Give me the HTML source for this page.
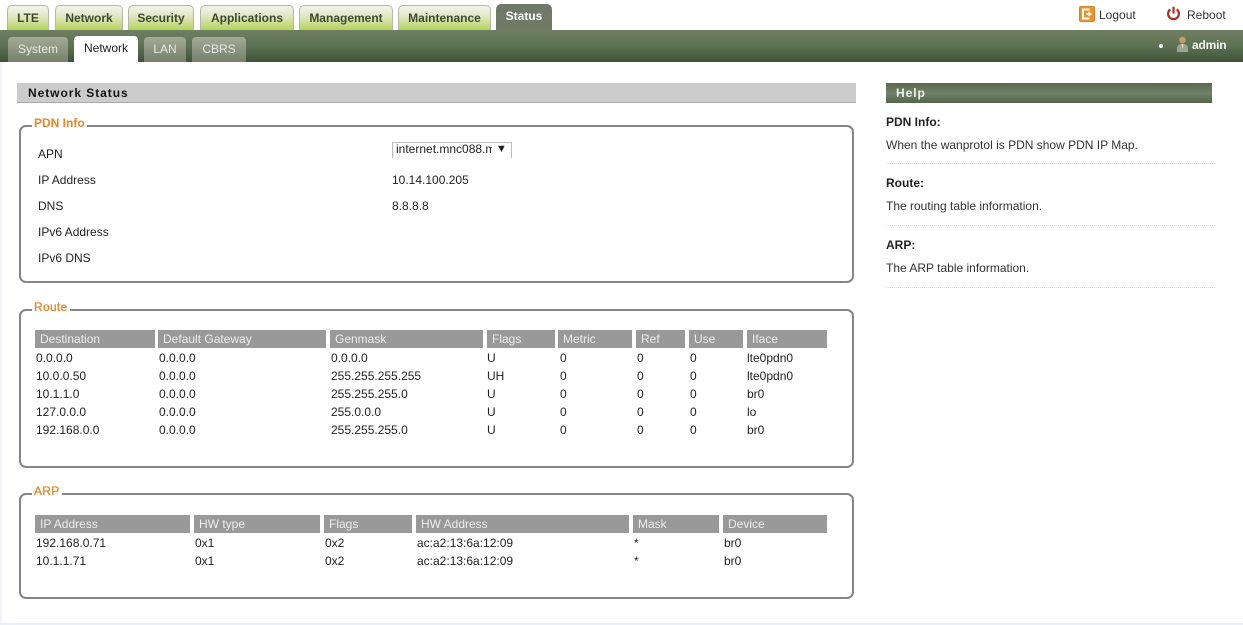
<!DOCTYPE html>
<html><head><meta charset="utf-8"><style>
html,body{margin:0;padding:0;background:#fff}
#p{position:relative;width:1243px;height:625px;overflow:hidden;background:#fff;font:12px/14px "Liberation Sans",sans-serif;color:#222}
#p div{position:absolute;white-space:nowrap}
.t{top:5px;height:24px;border:1px solid #b5b8a8;border-bottom:0;border-radius:5px 5px 0 0;background:linear-gradient(#f4f5ea 0,#dfe6bf 45%,#b5d35a 100%);color:#3c4a30;font-weight:bold;text-align:center;line-height:24px;box-sizing:content-box}
.s{top:37px;height:25px;border-radius:4px 4px 0 0;background:linear-gradient(#a3aa98,#74806a);color:#e8ebe2;text-align:center;line-height:25px}
.h{top:83px;height:19px;line-height:20px;font-weight:bold;letter-spacing:.95px}
.f{left:19px;width:831px;border:2px solid #858585;border-radius:7px}
.l{left:32px;background:#fff;padding:0 2px;color:#e2872a;font-weight:bold;line-height:14px}
.th{background:#999;color:#eee;height:18px;line-height:18px;padding-left:5px;box-sizing:border-box}
.r{position:absolute;left:0;top:0}
.c{color:#222}
.dot{left:886px;width:329px;border-top:1px dotted #d8d8d8}
</style></head><body><div id="p">
<div style="left:0;top:62px;width:2px;height:563px;background:#f2f6fa"></div>
<div style="left:0;top:623px;width:1243px;height:2px;background:#e4f0fa"></div>

<div style="left:0;top:30px;width:1243px;height:32px;background:linear-gradient(#6f7e62,#5d7253 50%,#3f5238)"></div>
<div class="t" style="left:7px;width:40px">LTE</div>
<div class="t" style="left:55px;width:66px">Network</div>
<div class="t" style="left:128px;width:64px">Security</div>
<div class="t" style="left:200px;width:92px">Applications</div>
<div class="t" style="left:299px;width:92px">Management</div>
<div class="t" style="left:398px;width:91px">Maintenance</div>
<div style="left:496px;top:4px;width:56px;height:26px;border-radius:5px 5px 0 0;background:linear-gradient(#70796a,#6f7a64);color:#fff;font-weight:bold;text-align:center;line-height:24px">Status</div>

<div class="s" style="left:8px;width:60px">System</div>
<div class="s" style="left:74px;top:36px;width:64px;height:26px;background:#fff;color:#222;line-height:25px">Network</div>
<div class="s" style="left:144px;width:42px">LAN</div>
<div class="s" style="left:192px;width:54px">CBRS</div>

<svg style="position:absolute;left:1079px;top:6px" width="16" height="16" viewBox="0 0 16 16"><rect x=".5" y=".5" width="15" height="15" rx="1.500" fill="#e9932c" stroke="#d9822a"/><path d="M10.500 3.500H4v9h6.500" fill="none" stroke="#fff" stroke-width="2"/><path d="M7 8h3" stroke="#fff" stroke-width="1.500"/><path d="M9.500 5.500l3.500 2.500-3.500 2.500z" fill="#fff"/></svg>
<div style="left:1099px;top:8px;color:#333">Logout</div>
<svg style="position:absolute;left:1166px;top:6px" width="15" height="15" viewBox="0 0 15 15"><path d="M4.300 3.400a5.400 5.400 0 1 0 6.400 0" fill="none" stroke="#a93226" stroke-width="2.200"/><path d="M7.500 .8v6.700" stroke="#a93226" stroke-width="2.200"/></svg>
<div style="left:1187px;top:8px;color:#333">Reboot</div>
<div style="left:1159px;top:44px;width:4px;height:4px;border-radius:50%;background:#fff"></div>
<svg style="position:absolute;left:1176px;top:36px" width="13" height="16" viewBox="0 0 13 16"><circle cx="6.500" cy="4" r="3.300" fill="#c89a6a"/><path d="M1 16v-4q0-4 5.500-4t5.500 4v4z" fill="#9aa596"/><path d="M5.500 8h2l-1 5z" fill="#e8e0d0"/></svg>
<div style="left:1192px;top:38px;color:#f2f4ee;font-weight:bold;letter-spacing:-.2px">admin</div>

<div class="h" style="left:17px;width:839px;background:#ccc;border-bottom:1px solid #aaa;color:#111;text-indent:11px">Network Status</div>
<div class="h" style="left:886px;width:326px;height:20px;background:linear-gradient(#59694d,#71806a 50%,#55664a);color:#f0f2ea;text-indent:10px">Help</div>

<div style="left:886px;top:115px;font-weight:bold;color:#222">PDN Info:</div>
<div style="left:886px;top:138px;color:#333">When the wanprotol is PDN show PDN IP Map.</div>
<div class="dot" style="top:163px"></div>
<div style="left:886px;top:176px;font-weight:bold">Route:</div>
<div style="left:886px;top:199px;color:#333">The routing table information.</div>
<div class="dot" style="top:225px"></div>
<div style="left:886px;top:238px;font-weight:bold">ARP:</div>
<div style="left:886px;top:261px;color:#333">The ARP table information.</div>
<div class="dot" style="top:287px"></div>

<div class="f" style="top:125px;height:154px"></div>
<div class="l" style="top:116px">PDN Info</div>
<div class="c" style="left:38px;top:147px">APN</div>
<div class="c" style="left:38px;top:173px">IP Address</div>
<div class="c" style="left:38px;top:199px">DNS</div>
<div class="c" style="left:38px;top:225px">IPv6 Address</div>
<div class="c" style="left:38px;top:251px">IPv6 DNS</div>
<div style="left:392px;top:142px;width:118px;height:15px;border:1px solid #bbb;border-bottom:0;box-sizing:content-box"></div>
<div class="c" style="left:396px;top:142px;width:96px;overflow:hidden">internet.mnc088.mcc</div>
<div class="c" style="left:496px;top:142px;font-size:11px">▼</div>
<div class="c" style="left:392px;top:173px;width:76px;overflow:hidden">10.14.100.205</div>
<div class="c" style="left:392px;top:199px">8.8.8.8</div>

<div class="f" style="top:309px;height:155px"></div>
<div class="l" style="top:300px;font-weight:normal;letter-spacing:.3px;-webkit-text-stroke:.3px #e2872a">Route</div>
<div class="th" style="left:35px;top:330px;width:120px">Destination</div>
<div class="th" style="left:158px;top:330px;width:168px">Default Gateway</div>
<div class="th" style="left:330px;top:330px;width:153px">Genmask</div>
<div class="th" style="left:487px;top:330px;width:68px">Flags</div>
<div class="th" style="left:558px;top:330px;width:74px">Metric</div>
<div class="th" style="left:636px;top:330px;width:49px">Ref</div>
<div class="th" style="left:689px;top:330px;width:54px">Use</div>
<div class="th" style="left:747px;top:330px;width:80px">Iface</div>

<div class="c" style="left:36px;top:351px">0.0.0.0</div><div class="c" style="left:159px;top:351px">0.0.0.0</div><div class="c" style="left:331px;top:351px">0.0.0.0</div><div class="c" style="left:487px;top:351px">U</div><div class="c" style="left:560px;top:351px">0</div><div class="c" style="left:637px;top:351px">0</div><div class="c" style="left:690px;top:351px">0</div><div class="c" style="left:747px;top:351px">lte0pdn0</div>
<div class="c" style="left:36px;top:369px">10.0.0.50</div><div class="c" style="left:159px;top:369px">0.0.0.0</div><div class="c" style="left:331px;top:369px">255.255.255.255</div><div class="c" style="left:487px;top:369px">UH</div><div class="c" style="left:560px;top:369px">0</div><div class="c" style="left:637px;top:369px">0</div><div class="c" style="left:690px;top:369px">0</div><div class="c" style="left:747px;top:369px">lte0pdn0</div>
<div class="c" style="left:36px;top:387px">10.1.1.0</div><div class="c" style="left:159px;top:387px">0.0.0.0</div><div class="c" style="left:331px;top:387px">255.255.255.0</div><div class="c" style="left:487px;top:387px">U</div><div class="c" style="left:560px;top:387px">0</div><div class="c" style="left:637px;top:387px">0</div><div class="c" style="left:690px;top:387px">0</div><div class="c" style="left:747px;top:387px">br0</div>
<div class="c" style="left:36px;top:405px">127.0.0.0</div><div class="c" style="left:159px;top:405px">0.0.0.0</div><div class="c" style="left:331px;top:405px">255.0.0.0</div><div class="c" style="left:487px;top:405px">U</div><div class="c" style="left:560px;top:405px">0</div><div class="c" style="left:637px;top:405px">0</div><div class="c" style="left:690px;top:405px">0</div><div class="c" style="left:747px;top:405px">lo</div>
<div class="c" style="left:36px;top:423px">192.168.0.0</div><div class="c" style="left:159px;top:423px">0.0.0.0</div><div class="c" style="left:331px;top:423px">255.255.255.0</div><div class="c" style="left:487px;top:423px">U</div><div class="c" style="left:560px;top:423px">0</div><div class="c" style="left:637px;top:423px">0</div><div class="c" style="left:690px;top:423px">0</div><div class="c" style="left:747px;top:423px">br0</div>

<div class="f" style="top:493px;height:102px"></div>
<div class="l" style="top:484px;font-weight:normal;letter-spacing:.3px;-webkit-text-stroke:.3px #e2872a">ARP</div>
<div class="th" style="left:35px;top:515px;width:155px">IP Address</div>
<div class="th" style="left:194px;top:515px;width:126px">HW type</div>
<div class="th" style="left:324px;top:515px;width:88px">Flags</div>
<div class="th" style="left:416px;top:515px;width:213px">HW Address</div>
<div class="th" style="left:633px;top:515px;width:86px">Mask</div>
<div class="th" style="left:723px;top:515px;width:104px">Device</div>

<div class="c" style="left:36px;top:536px">192.168.0.71</div><div class="c" style="left:195px;top:536px">0x1</div><div class="c" style="left:325px;top:536px">0x2</div><div class="c" style="left:417px;top:536px">ac:a2:13:6a:12:09</div><div class="c" style="left:634px;top:536px">*</div><div class="c" style="left:724px;top:536px">br0</div>
<div class="c" style="left:36px;top:554px">10.1.1.71</div><div class="c" style="left:195px;top:554px">0x1</div><div class="c" style="left:325px;top:554px">0x2</div><div class="c" style="left:417px;top:554px">ac:a2:13:6a:12:09</div><div class="c" style="left:634px;top:554px">*</div><div class="c" style="left:724px;top:554px">br0</div>
</div></body></html>
